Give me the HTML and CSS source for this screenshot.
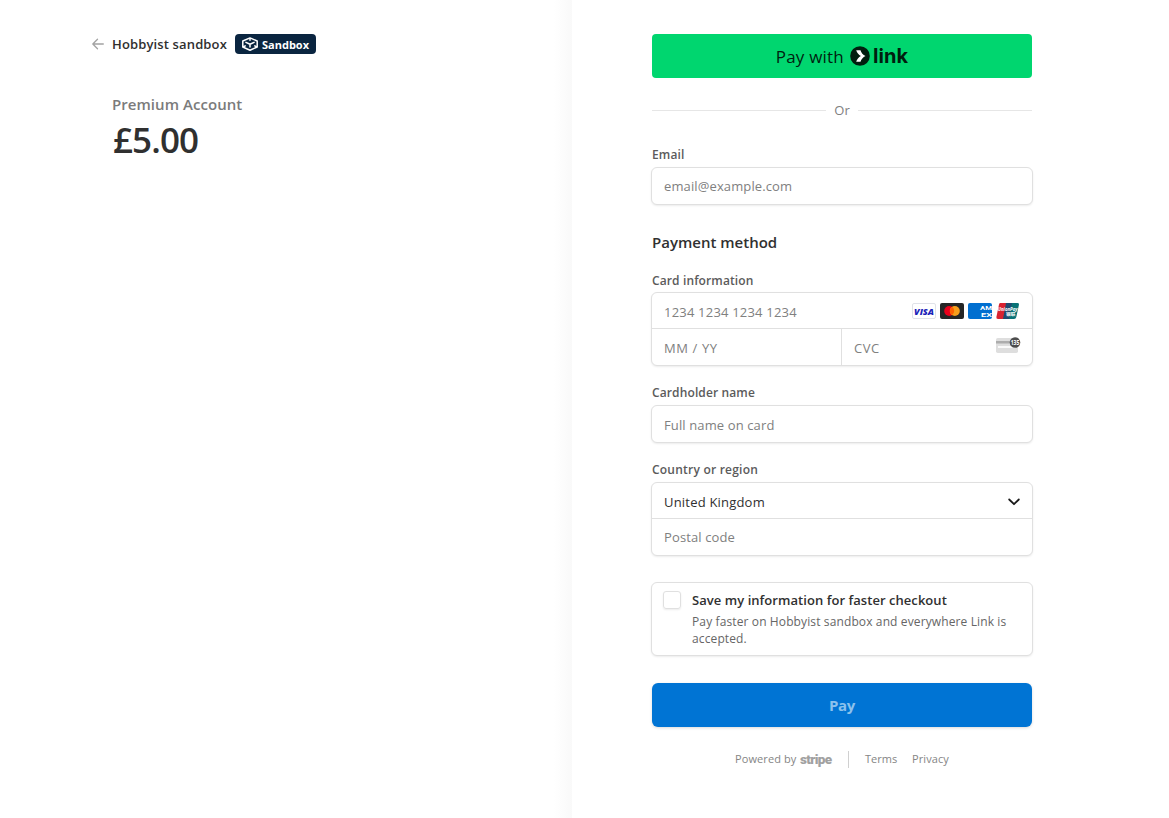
FILE: index.html
```html
<!DOCTYPE html>
<html lang="en">
<head>
<meta charset="utf-8">
<title>Hobbyist sandbox</title>
<link rel="stylesheet" href="styles.css">
</head>
<body>
<div class="page">
  <section class="summary">
    <header class="merchant">
      <svg class="back" width="12" height="12" viewBox="0 0 12 12" fill="none" stroke="#a3a3a3" stroke-width="1.3" stroke-linecap="round" stroke-linejoin="round"><path d="M11.3 6H.9M5.5 1.2.8 6l4.7 4.8"/></svg>
      <span class="merchant-name">Hobbyist sandbox</span>
      <span class="badge">
        <svg width="16" height="14" viewBox="0 0 16 14" fill="none" stroke="#fff" stroke-width="1.500" stroke-linejoin="round"><path d="M8 .9 15.200 4v6L8 13.200.8 10V4z"/><path d="M3.400 5.100 8 7.200l4.600-2.100M8 7.200v3.400M8 .9v2.800M.8 10l3-1.400M15.200 10l-3-1.400"/></svg>
        <span class="badge-text">Sandbox</span>
      </span>
    </header>
    <div class="product">Premium Account</div>
    <div class="price">£5.00</div>
  </section>

  <main class="payment">
    <form class="form">
      <button class="link-button" type="button">
        <span class="link-label">Pay with</span>
        <svg width="20" height="20" viewBox="0 0 20 20"><circle cx="10" cy="10" r="9.800" fill="#011e0f"/><path d="M6.200 4.200h4.300c.7 2.500 2.500 4.600 5 5.800-2.500 1.200-4.300 3.300-5 5.800H6.200c.7-2.400 2.400-4.500 4.700-5.800-2.300-1.300-4-3.400-4.700-5.800z" fill="#fff"/></svg>
        <span class="link-word">link</span>
      </button>

      <div class="separator"><span>Or</span></div>

      <label class="label">Email</label>
      <div class="box"><div class="field placeholder email">email@example.com</div></div>

      <h2 class="heading">Payment method</h2>

      <label class="label card-label">Card information</label>
      <div class="box">
        <div class="field placeholder number low">
          <span>1234 1234 1234 1234</span>
          <span class="brands">
            <svg width="24" height="16" viewBox="0 0 24 16"><rect x=".5" y=".5" width="23" height="15" rx="1.500" fill="#fff" stroke="#e0e2e8"/><text class="visa" x="2" y="11.500" textLength="20" lengthAdjust="spacingAndGlyphs">VISA</text></svg>
            <svg width="24" height="16" viewBox="0 0 24 16"><rect width="24" height="16" rx="2" fill="#252525"/><circle cx="9.200" cy="8" r="5" fill="#eb001b"/><circle cx="14.800" cy="8" r="5" fill="#f79e1b"/><path d="M12 3.860a5 5 0 0 1 0 8.280 5 5 0 0 1 0-8.280z" fill="#ff5f00"/></svg>
            <svg width="24" height="16" viewBox="0 0 24 16"><rect width="24" height="16" rx="2" fill="#016fd0"/><text class="amex" x="12" y="7.300" textLength="12" lengthAdjust="spacingAndGlyphs">AM</text><text class="amex" x="13" y="13.800" textLength="11" lengthAdjust="spacingAndGlyphs">EX</text></svg>
            <svg width="24" height="16" viewBox="0 0 24 16"><path d="M4 0h7L8 16H2Q0 16 .4 14L3 1.500Q3.300 0 4 0z" fill="#d92230"/><path d="M10 0h7l-3 16H7z" fill="#1f4b70"/><path d="M16 0h5.500q1.800 0 1.400 2L20.300 14q-.4 2-2.300 2h-5z" fill="#087276"/><text class="union" x="2" y="7.800" textLength="19.500" lengthAdjust="spacingAndGlyphs">UnionPay</text><text class="union-cn" x="10" y="13.300" textLength="9.500" lengthAdjust="spacingAndGlyphs">银联</text></svg>
          </span>
        </div>
        <div class="split">
          <div class="field placeholder expiry low">MM / YY</div>
          <div class="field placeholder cvc low">
            <span>CVC</span>
            <svg class="cvc-icon" width="25" height="16" viewBox="0 0 25 16"><rect y="1" width="22" height="15" rx="1.800" fill="#dedede"/><path d="M0 4h22v2.500H0z" fill="#adadad"/><path d="M2 9h18v2H2z" fill="#fafafa"/><circle cx="19" cy="5.500" r="5.300" fill="#4d4d4d"/><text class="cvc-digits" x="14.700" y="8" textLength="8.600" lengthAdjust="spacingAndGlyphs">135</text></svg>
          </div>
        </div>
      </div>

      <label class="label name-label">Cardholder name</label>
      <div class="box"><div class="field placeholder name low">Full name on card</div></div>

      <label class="label country-label">Country or region</label>
      <div class="box">
        <div class="field country low">
          <span>United Kingdom</span>
          <svg class="chevron" width="12" height="8" viewBox="0 0 12 8" fill="none" stroke="#1a1a1a" stroke-width="1.800" stroke-linecap="round" stroke-linejoin="round"><path d="M1.200 1.500 6 6.200l4.800-4.700"/></svg>
        </div>
        <div class="field placeholder postal">Postal code</div>
      </div>

      <div class="box save">
        <span class="checkbox"></span>
        <div>
          <div class="save-title">Save my information for faster checkout</div>
          <div class="save-text">Pay faster on Hobbyist sandbox and everywhere Link is accepted.</div>
        </div>
      </div>

      <button class="pay-button" type="button">Pay</button>
    </form>

    <footer class="footer">
      <span class="powered">Powered by</span>
      <span class="stripe">stripe</span>
      <span class="rule"></span>
      <a class="terms">Terms</a>
      <a class="privacy">Privacy</a>
    </footer>
  </main>
</div>
</body>
</html>
```
FILE: styles.css
```css
* { box-sizing: border-box; }
body {
  margin: 0;
  background: #fff;
  color: #303030;
  font-family: "Open Sans", "Noto Sans", sans-serif;
  font-size: 13px;
}
svg { display: block; flex: none; overflow: visible; }
button { border: 0; padding: 0; font-family: inherit; }

.page { display: flex; height: 818px; overflow: hidden; }

.summary {
  width: 572px;
  padding: 34px 0 0 92px;
  background: linear-gradient(to right, #fff, #f9f9f9) right / 18px 100% no-repeat;
}
.merchant { display: flex; align-items: center; height: 20px; }
.merchant-name { width: 115px; margin: 0 8px; white-space: nowrap; font-weight: 600; font-size: 13px; letter-spacing: .14px; }
.badge {
  display: flex;
  align-items: center;
  gap: 4px;
  width: 81px;
  height: 20px;
  padding-left: 7px;
  border-radius: 4px;
  background: #0a2540;
  color: #fff;
}
.badge-text { font-weight: 700; font-size: 11px; }
.product {
  margin: 38px 0 0 20px;
  line-height: 24px;
  font-weight: 600;
  font-size: 15px;
  letter-spacing: .05px;
  color: #7b7b7b;
}
.price { margin: 1px 0 0 21px; line-height: 46px; font-weight: 600; font-size: 35px; letter-spacing: -.9px; }

.payment { flex: 1; padding: 34px 0 0 79px; }
.form { width: 382px; }

.link-button {
  display: flex;
  align-items: center;
  justify-content: center;
  width: 380px;
  height: 44px;
  margin: 0 1px;
  border-radius: 4px;
  background: #00d66f;
  color: #011e0f;
}
.link-label { margin-right: 6px; font-size: 17px; font-weight: 500; letter-spacing: .2px; }
.link-word { margin-left: 3px; font-family: Inter, sans-serif; font-size: 20px; font-weight: 700; letter-spacing: .1px; }

.separator {
  display: flex;
  align-items: center;
  gap: 8px;
  height: 20px;
  margin: 22px 1px 25px;
  color: #808080;
}
.separator::before, .separator::after { content: ""; flex: 1; height: 1px; background: #e6e6e6; }

.label {
  display: block;
  margin: 0 1px 3px;
  line-height: 19px;
  font-size: 12px;
  font-weight: 600;
  letter-spacing: .12px;
  color: #5b5b5b;
}
.box {
  border: 1px solid #e0e0e0;
  border-radius: 6px;
  background: #fff;
  box-shadow: 0 1px 2px rgba(0, 0, 0, .08);
}
.field { display: flex; align-items: center; height: 36px; padding: 0 12px; letter-spacing: .12px; }
.low { padding-top: 2px; }
.placeholder { color: #808080; }
.heading { margin: 26px 1px 18px; line-height: 22px; font-size: 15px; font-weight: 600; color: #303030; }
.card-label { margin-bottom: 2px; }
.number { height: 35px; justify-content: space-between; letter-spacing: .2px; }
.brands { display: flex; gap: 4px; margin-top: -2px; letter-spacing: 0; }
.visa { font: italic 800 9.500px "Open Sans", sans-serif; fill: #1a22b8; }
.amex { font: 700 6px Roboto, sans-serif; fill: #fff; }
.union { font: italic 700 5px "Open Sans", sans-serif; fill: #fff; }
.union-cn { font: 700 4px "Noto Sans CJK SC", sans-serif; fill: #fff; }
.split { display: flex; height: 37px; border-top: 1px solid #e0e0e0; }
.expiry { width: 189px; letter-spacing: .6px; }
.cvc { flex: 1; border-left: 1px solid #e0e0e0; justify-content: space-between; padding-right: 11px; letter-spacing: .5px; }
.cvc-icon { margin-top: -7px; letter-spacing: 0; }
.cvc-digits { font: 700 6.500px "Open Sans", sans-serif; fill: #fff; }
.name-label, .country-label { margin-top: 17px; }
.country-label { letter-spacing: .22px; }
.country { height: 35px; justify-content: space-between; color: #303030; letter-spacing: .2px; }
.chevron { margin-top: 1px; }
.postal { height: 37px; border-top: 1px solid #e0e0e0; }

.save { display: flex; gap: 11px; height: 74px; margin-top: 26px; padding: 8px 11px; }
.checkbox {
  flex: none;
  width: 18px;
  height: 18px;
  border: 1px solid #e0e0e0;
  border-radius: 3px;
  box-shadow: 0 1px 2px rgba(0, 0, 0, .08);
}
.save-title { line-height: 18px; font-weight: 600; white-space: nowrap; letter-spacing: .05px; }
.save-text { width: 330px; margin-top: 4px; line-height: 17px; font-size: 12px; letter-spacing: .12px; color: #666; }

.pay-button {
  display: block;
  width: 380px;
  height: 44px;
  margin: 27px 1px 0;
  border-radius: 6px;
  background: #0074d4;
  box-shadow: 0 1px 3px rgba(0, 0, 0, .15);
  color: #8cc2ec;
  font-size: 15px;
  font-weight: 700;
  letter-spacing: -.4px;
}

.footer {
  display: flex;
  align-items: center;
  height: 18px;
  margin: 23px 0 0 84px;
  font-size: 11px;
  line-height: 16px;
  color: #858585;
}
.powered { width: 65px; white-space: nowrap; letter-spacing: .1px; }
.stripe { width: 48px; font-family: Roboto, sans-serif; font-size: 13.500px; font-weight: 900; color: #a1a1a1; letter-spacing: -.65px; }
.rule { width: 1px; height: 17px; background: #d0d0d0; }
.terms { width: 47px; margin-left: 16px; }
.privacy { letter-spacing: .1px; }
```
